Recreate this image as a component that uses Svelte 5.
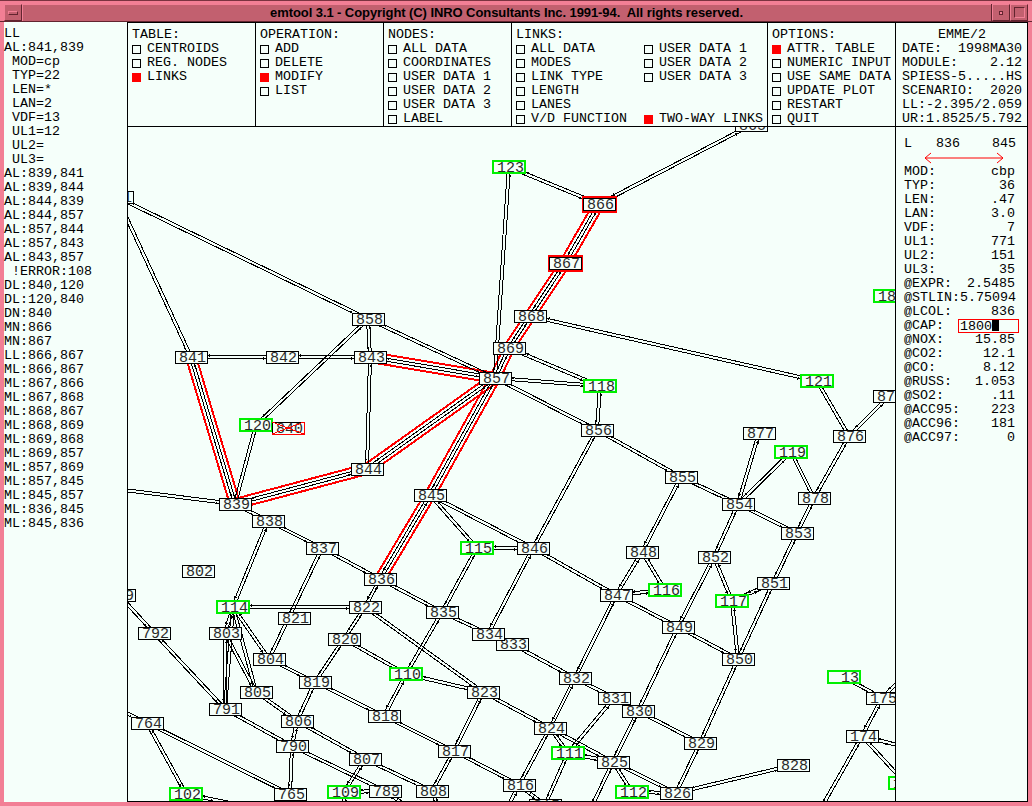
<script>
  const N = {
    123:[509,167,'g'],866:[599,204,'r'],867:[565,263,'r'],868:[530,316],869:[509,348],857:[495,378],118:[600,386,'g'],
    858:[368,319],841:[191,357],842:[282,357],843:[370,357],120:[256,425,'g'],840:[288,428,'x'],844:[367,469],
    839:[235,504],838:[268,521],845:[430,495],846:[533,548],115:[477,548,'g'],856:[597,430],855:[681,477],854:[738,504],
    853:[797,533],878:[814,498],876:[849,436],877:[759,433],119:[791,452,'g'],121:[817,381,'g'],875:[889,396],180:[890,296,'g'],
    852:[714,557],851:[773,583],848:[642,552],847:[616,595],116:[665,590,'g'],117:[732,601,'g'],849:[678,627],850:[738,659],
    836:[380,579],837:[322,548],835:[442,612],834:[488,634],833:[512,644],832:[575,678],831:[614,698],830:[638,711],
    829:[700,743],828:[793,765],826:[676,793],825:[613,762],824:[550,728],823:[483,692],822:[365,607],821:[294,618],
    820:[344,639],819:[315,682],818:[384,716],817:[454,751],816:[519,785],815:[545,805],111:[568,753,'g'],112:[632,792,'g'],
    110:[406,674,'g'],114:[233,607,'g'],803:[225,633],792:[154,633],804:[269,659],805:[256,692],791:[225,709],790:[292,746],
    806:[297,721],807:[365,759],808:[432,791],789:[385,791],109:[344,792,'g'],765:[290,794],764:[147,723],102:[186,794,'g'],
    802:[198,571],13:[844,677,'g'],175:[882,698],174:[862,736],179:[905,783,'g'],861:[117,197],799:[119,595],865:[751,125],
    h1:[100,487,'h'],h2:[110,585,'h'],h3:[100,700,'h'],h4:[230,803,'h'],h5:[345,815,'h'],h6:[405,805,'h'],h7:[820,810,'h'],
    h8:[905,747,'h'],h9:[905,675,'h'],h10:[590,810,'h'],h11:[505,812,'h'],h12:[440,812,'h'],h13:[290,815,'h']
  };
  const plain = `123-866 866-865 123-857 868-121 869-118 857-118 857-856 118-856 858-857 858-843 858-120 858-861 841-861
    841-842 842-843 843-844 120-839 120-840 839-838 839-h1 845-846 845-115 115-846 115-835 836-822 836-835 838-837 837-836
    838-114 837-804 114-822 114-803 114-804 114-805 114-791 803-805 803-791 792-791 792-h2 804-819 819-820 820-822 820-110
    822-823 819-818 819-806 805-806 791-790 806-790 806-807 790-789 790-765 807-808 807-109 109-789 808-817 818-817 818-110
    110-835 110-823 823-817 823-824 817-816 835-834 834-833 833-832 846-834 856-846 846-847 855-848 848-847 848-116 847-116
    847-849 847-832 849-850 849-852 849-830 850-851 850-829 850-117 117-852 117-851 854-852 854-853 854-855 854-877 854-119
    119-878 878-853 878-876 876-121 876-875 853-851 855-856 832-824 832-831 831-111 830-825 830-829 829-826 826-828 826-825
    826-112 825-112 825-111 825-824 824-111 824-816 111-815 816-815 13-175 175-174 174-h7 174-179 174-h8 175-h9 102-764
    764-765 102-h4 764-h3 109-h5 789-h6 808-h12 825-h10 816-h11 765-h13`.trim().split(/\s+/);
  const red = '866-867 867-868 868-869 869-857 843-857 841-839 839-844 844-857 845-857 845-836'.split(' ');

  function geom(pair) {
    const [a, b] = pair.split('-');
    const [x1, y1] = N[a], [x2, y2] = N[b];
    const dx = x2 - x1, dy = y2 - y1, len = Math.hypot(dx, dy);
    const ux = dx / len, uy = dy / len, nx = -uy, ny = ux;
    const t = Math.min(16 / Math.abs(dx || 1e-6), 7 / Math.abs(dy || 1e-6));
    return { x1, y1, x2, y2, ux, uy, nx, ny, ex: dx * t, ey: dy * t };
  }
  const line = (g, o) => ({ x1: g.x1 + g.nx * o, y1: g.y1 + g.ny * o, x2: g.x2 + g.nx * o, y2: g.y2 + g.ny * o });
  const head = (px, py, ux, uy) =>
    `${px},${py} ${px - ux * 3 - uy * 1.5},${py - uy * 3 + ux * 1.5} ${px - ux * 3 + uy * 1.5},${py - uy * 3 - ux * 1.5}`;

  const plainLines = [], redLines = [], heads = [];
  for (const p of [...plain, ...red]) {
    const g = geom(p);
    plainLines.push(line(g, 1.5), line(g, -1.5));
    heads.push(head(g.x2 + g.nx * 1.5 - g.ex, g.y2 + g.ny * 1.5 - g.ey, g.ux, g.uy));
    heads.push(head(g.x1 - g.nx * 1.5 + g.ex, g.y1 - g.ny * 1.5 + g.ey, -g.ux, -g.uy));
  }
  for (const p of red) {
    const g = geom(p);
    redLines.push(line(g, 5), line(g, -5));
  }
  const nodes = Object.entries(N).filter(([, v]) => v[2] !== 'h').map(([id, v]) => ({ id, x: v[0], y: v[1], k: v[2] || 'n' }));

  const leftLines = ['LL','AL:841,839',' MOD=cp',' TYP=22',' LEN=*',' LAN=2',' VDF=13',' UL1=12',' UL2=',' UL3=','AL:839,841','AL:839,844','AL:844,839','AL:844,857','AL:857,844','AL:857,843','AL:843,857',' !ERROR:108','DL:840,120','DL:120,840','DN:840','MN:866','MN:867','LL:866,867','ML:866,867','ML:867,866','ML:867,868','ML:868,867','ML:868,869','ML:869,868','ML:869,857','ML:857,869','ML:857,845','ML:845,857','ML:836,845','ML:845,836'];
  const menus = [
    { title:'TABLE:', items:[['CENTROIDS',0],['REG. NODES',0],['LINKS',1]] },
    { title:'OPERATION:', items:[['ADD',0],['DELETE',0],['MODIFY',1],['LIST',0]] },
    { title:'NODES:', items:[['ALL DATA',0],['COORDINATES',0],['USER DATA 1',0],['USER DATA 2',0],['USER DATA 3',0],['LABEL',0]] }
  ];
  const links1 = [['ALL DATA',0],['MODES',0],['LINK TYPE',0],['LENGTH',0],['LANES',0],['V/D FUNCTION',0]];
  const links2 = [['USER DATA 1',0],['USER DATA 2',0],['USER DATA 3',0],null,null,['TWO-WAY LINKS',1]];
  const options = [['ATTR. TABLE',1],['NUMERIC INPUT',0],['USE SAME DATA',0],['UPDATE PLOT',0],['RESTART',0],['QUIT',0]];
  const emme = [['DATE:','1998MA30'],['MODULE:','2.12'],['SPIESS-5.....HS',''],['SCENARIO:','2020'],['LL:-2.395/2.059',''],['UR:1.8525/5.792','']];
  const attrs = [['MOD:','cbp'],['TYP:','36'],['LEN:','.47'],['LAN:','3.0'],['VDF:','7'],['UL1:','771'],['UL2:','151'],['UL3:','35'],['@EXPR:','2.5485'],['@STLIN:','5.75094'],['@LCOL:','836'],['@CAP:',null],['@NOX:','15.85'],['@CO2:','12.1'],['@CO:','8.12'],['@RUSS:','1.053'],['@SO2:','.11'],['@ACC95:','223'],['@ACC96:','181'],['@ACC97:','0']];
</script>

{#snippet check(item)}
  <div class="opt">
    {#if item}<span class="box" class:on={item[1]}></span><span>{item[0]}</span>{/if}
  </div>
{/snippet}

<div class="window">
  <header class="titlebar">
    <div class="btn"><span class="dash"></span></div>
    <div class="title">emtool 3.1 - Copyright (C) INRO Consultants Inc. 1991-94.  All rights reserved.</div>
    <div class="btn"><span class="dot"></span></div>
    <div class="btn"><span class="square"></span></div>
  </header>
  <div class="body">
    <aside class="left">
      {#each leftLines as l}<div class="line">{l}</div>{/each}
    </aside>
    <div class="main">
      <nav class="menu">
        {#each menus as m}
          <section class="col">
            <div class="line">{m.title}</div>
            {#each m.items as it}{@render check(it)}{/each}
          </section>
        {/each}
        <section class="col wide">
          <div class="line">LINKS:</div>
          <div class="two">
            <div>{#each links1 as it}{@render check(it)}{/each}</div>
            <div>{#each links2 as it}{@render check(it)}{/each}</div>
          </div>
        </section>
        <section class="col">
          <div class="line">OPTIONS:</div>
          {#each options as it}{@render check(it)}{/each}
        </section>
        <section class="col emme">
          <div class="line center">EMME/2</div>
          {#each emme as [a, b]}<div class="row"><span>{a}</span><span>{b}</span></div>{/each}
        </section>
      </nav>
      <div class="lower">
        <svg class="map" viewBox="128 127 767 674" width="767" height="674">
          {#each redLines as l}<line class="rd" {...l} />{/each}
          {#each plainLines as l}<line class="bk" {...l} />{/each}
          {#each heads as h}<polygon class="hd" points={h} />{/each}
          {#each nodes as n}
            <g>
              {#if n.k === 'r'}
                <rect class="rout" x={n.x - 16} y={n.y - 7} width="33" height="15" />
              {/if}
              <rect class={'node ' + n.k} x={n.x - 16} y={n.y - 6} width="32" height="12" />
              <text class="lbl" x={n.x + 15} y={n.y + 5}>{n.id}</text>
              {#if n.k === 'x'}
                <path class="cross" d={`M${n.x - 16} ${n.y - 6}L${n.x + 16} ${n.y + 6}M${n.x - 16} ${n.y + 6}L${n.x + 16} ${n.y - 6}M${n.x - 16} ${n.y + 6}H${n.x + 16}V${n.y - 6}`} />
              {/if}
            </g>
          {/each}
        </svg>
        <aside class="info">
          <div class="linkhead"><span>L</span><span>836</span><span>845</span></div>
          <svg class="arrow" width="120" height="14" viewBox="0 0 120 14">
            <path d="M21 7H99M27 2L21 7L27 12M93 2L99 7L93 12" />
          </svg>
          {#each attrs as [a, b]}
            <div class="row">
              <span>{a}</span>
              {#if b === null}
                <span class="input">1800<span class="cursor"></span></span>
              {:else}<span>{b}</span>{/if}
            </div>
          {/each}
        </aside>
      </div>
    </div>
  </div>
</div>

<style>
  :global(body) { margin: 0; }
  .window {
    width: 1032px; height: 806px; box-sizing: border-box;
    background: #c2606f; border: 1px solid #7a3340; border-width: 1px 0 0 0;
    display: flex; flex-direction: column;
    font: 13.33px/14px "Liberation Mono", monospace; color: #000;
    overflow: hidden; box-shadow: inset 0 0 0 4px #f27f95;
  }
  .titlebar { height: 21px; flex: none; display: flex; align-items: stretch; padding: 3px 4px 0 4px; box-sizing: border-box; border-bottom: 1px solid #62242f; }
  .title {
    flex: 1; text-align: center; white-space: pre; padding-right: 1px;
    font: bold 13px/17px "Liberation Sans", sans-serif; letter-spacing: -.08px; color: #000;
    border-left: 1px solid #f27f95; border-right: 1px solid #62242f;
  }
  .btn { width: 18px; flex: none; display: flex; align-items: center; justify-content: center; box-sizing: border-box; border: 1px solid; border-color: #f27f95 #62242f #62242f #f27f95; }
  .dash { width: 8px; height: 2px; background: #c2606f; border: 1px solid; border-color: #f27f95 #62242f #62242f #f27f95; }
  .dot { width: 2px; height: 2px; background: #f27f95; border: 1px solid #62242f; }
  .square { width: 9px; height: 9px; border: 1px solid; border-color: #62242f #f27f95 #f27f95 #62242f; }
  .body { flex: 1; min-height: 0; display: flex; padding: 0 4px 4px 4px; }
  .left { width: 124px; flex: none; box-sizing: border-box; background: #f5fffa; padding: 5px 0 0 0; border-right: 1px solid #000; }
  .line { white-space: pre; height: 14px; }
  .main { flex: 1; min-width: 0; display: flex; flex-direction: column; border-right: 1px solid #000; border-bottom: 1px solid #000; }
  .menu { display: flex; height: 105px; flex: none; background: #f5fffa; border-bottom: 1px solid #000; border-top: 1px solid #000; box-sizing: border-box; }
  .col { width: 128px; flex: none; box-sizing: border-box; padding: 5px 0 0 4px; border-right: 1px solid #000; }
  .col.wide { width: 256px; }
  .two { display: grid; grid-template-columns: 128px 1fr; }
  .emme { flex: 1; width: auto; border-right: none; padding: 5px 8px 0 6px; }
  .center { text-align: center; }
  .opt { display: flex; align-items: center; gap: 6px; height: 14px; white-space: pre; }
  .box { width: 7px; height: 7px; border: 1px solid #000; flex: none; }
  .box.on { background: #f00; border-color: #f00; }
  .row { display: flex; justify-content: space-between; height: 14px; white-space: pre; }
  .lower { flex: 1; min-height: 0; display: flex; }
  .map { display: block; flex: none; background: #f5fffa; overflow: hidden; border-right: 1px solid #000; shape-rendering: crispEdges; }
  .bk { stroke: #000; stroke-width: 1; }
  .rd { stroke: #f00; stroke-width: 2; }
  .hd { fill: #000; }
  .node { fill: #f5fffa; stroke: #000; stroke-width: 1; }
  .node.g { stroke: #00f000; stroke-width: 2; }
  .node.x { stroke: #000; }
  .node.r { stroke: #000; }
  .rout { fill: none; stroke: #f00; stroke-width: 2; }
  .cross { stroke: #f00; fill: none; stroke-width: 1; }
  .lbl { font: 15px "Liberation Mono", monospace; text-anchor: end; fill: #2a2a2a; }
  .info { flex: 1; min-width: 0; background: #f5fffa; padding: 10px 12px 0 8px; box-sizing: border-box; }
  .linkhead { display: grid; grid-template-columns: 32px 56px 24px; height: 14px; }
  .arrow { display: block; }
  .arrow path { fill: none; stroke: #f00; stroke-width: 1; shape-rendering: auto; }
  .input { width: 58px; height: 12px; line-height: 13px; border: 1px solid #f00; margin-right: -4px; padding-left: 1px; display: block; }
  .cursor { display: inline-block; width: 7px; height: 11px; background: #000; vertical-align: -1px; }
</style>
